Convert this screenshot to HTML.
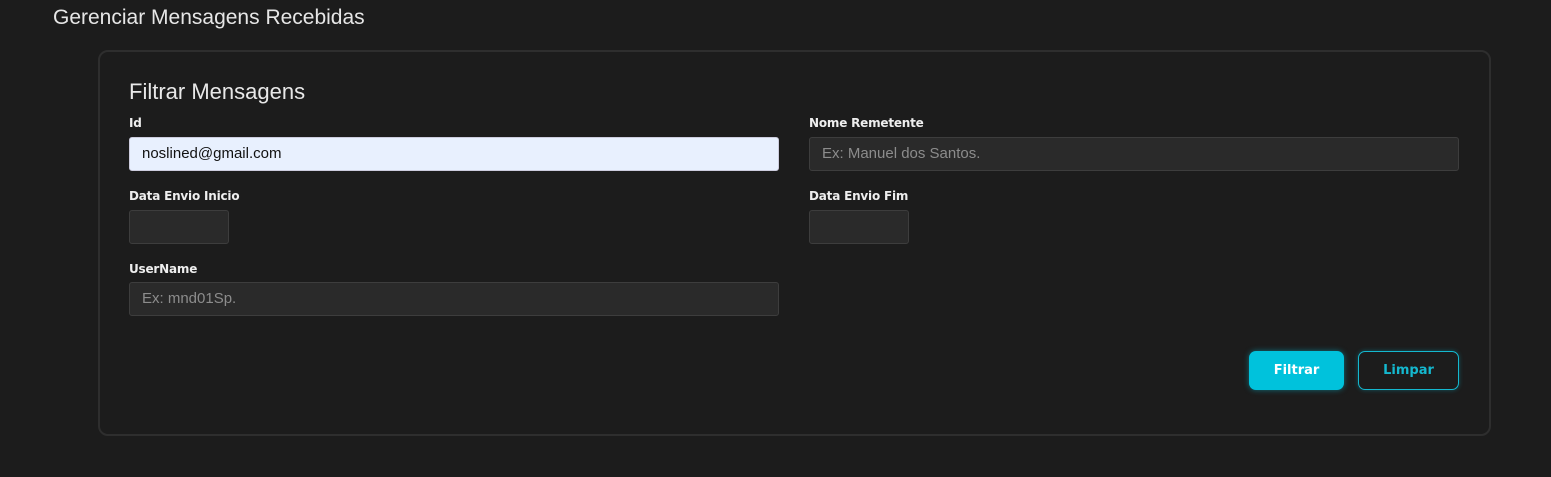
<!DOCTYPE html>
<html><head><meta charset="utf-8"><style>
*{box-sizing:border-box;margin:0;padding:0}
body{width:1551px;height:477px;background:#1c1c1c;font-family:"Liberation Sans",sans-serif;color:#e8e8e8;position:relative;overflow:hidden}
.t{position:absolute;left:53px;top:6px;font-size:21px;color:#e6e6e6}
.card{position:absolute;left:98px;top:50px;width:1393px;height:386px;border:2px solid #2e2e2e;border-radius:10px}
.h{position:absolute;left:129px;top:79px;font-size:22px;color:#e8e8e8}
.l{position:absolute;font-size:12px;font-weight:bold;font-family:"DejaVu Sans",sans-serif;color:#eee;letter-spacing:-0.2px}
.in{position:absolute;height:34px;background:#2a2a2a;border:1px solid #3d3d3d;border-radius:3px;font-size:15px;color:#8c8c8c;padding:7px 12px}
.b{position:absolute;top:351px;height:39px;border-radius:7px;font-size:13px;font-weight:bold;font-family:"DejaVu Sans",sans-serif;display:flex;align-items:center;justify-content:center}
</style></head><body>
<div class="t">Gerenciar Mensagens Recebidas</div>
<div class="card"></div>
<div class="h">Filtrar Mensagens</div>
<div class="l" style="left:129px;top:116px">Id</div>
<div class="in" style="left:129px;top:137px;width:650px;background:#e8f0fe;color:#111;border-color:#ccd">noslined@gmail.com</div>
<div class="l" style="left:809px;top:116px">Nome Remetente</div>
<div class="in" style="left:809px;top:137px;width:650px">Ex: Manuel dos Santos.</div>
<div class="l" style="left:129px;top:189px">Data Envio Inicio</div>
<div class="in" style="left:129px;top:210px;width:100px"></div>
<div class="l" style="left:809px;top:189px">Data Envio Fim</div>
<div class="in" style="left:809px;top:210px;width:100px"></div>
<div class="l" style="left:129px;top:262px">UserName</div>
<div class="in" style="left:129px;top:282px;width:650px">Ex: mnd01Sp.</div>
<div class="b" style="left:1249px;width:95px;background:#00c2dc;color:#fff;box-shadow:0 0 6px rgba(0,194,220,.5)">Filtrar</div>
<div class="b" style="left:1358px;width:101px;border:1.5px solid #14b8cf;color:#14b8cf;box-shadow:0 0 5px rgba(0,194,220,.35)">Limpar</div>
</body></html>
